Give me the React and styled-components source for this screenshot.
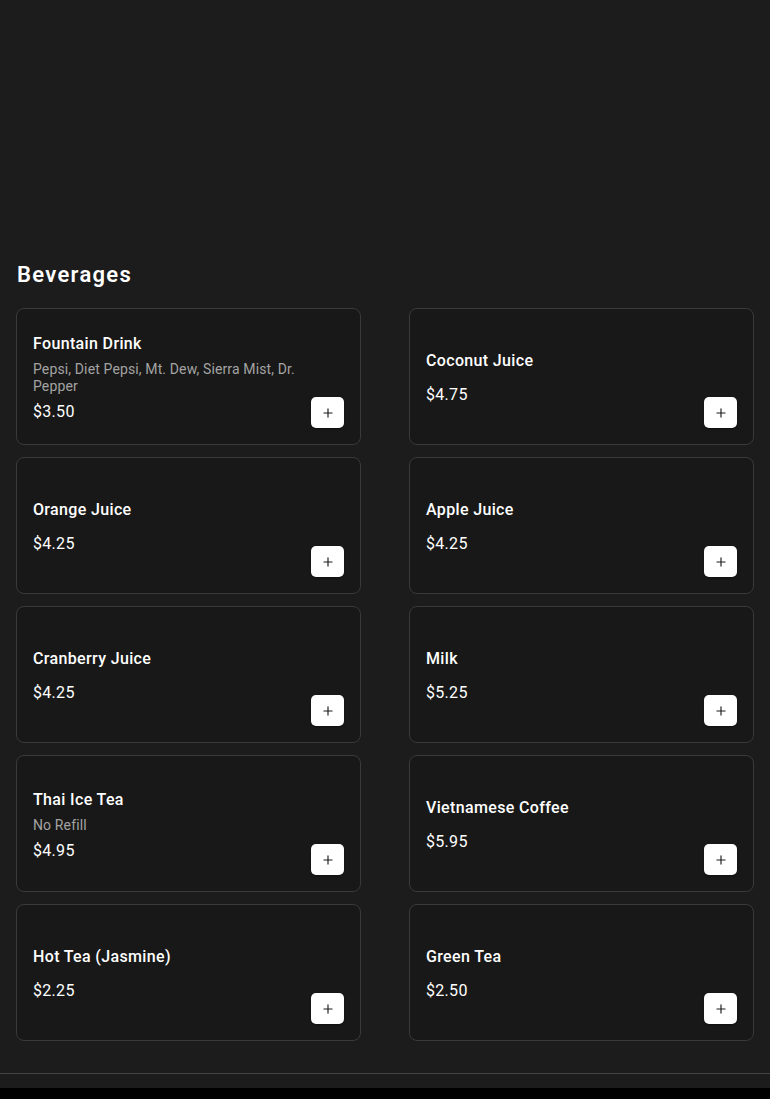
import React from 'react'
import styled, { createGlobalStyle } from 'styled-components'
import { Plus } from 'lucide-react'

const GlobalStyle = createGlobalStyle`
    * { box-sizing: border-box; }
    html, body {
        margin: 0;
        padding: 0;
        background: #000;
    }
    body {
        font-family: Roboto, "Liberation Sans", sans-serif;
        color: #fff;
    }
`;

const Page = styled.div`
    background: #1c1c1c;
`;

const Hero = styled.div`
    height: 237px;
`;

const Section = styled.section`
    padding: 24px 16px 32px;
`;

const Heading = styled.h2`
    margin: 0 0 19px;
    font-size: 22px;
    line-height: 28px;
    font-weight: 600;
    letter-spacing: 1.3px;
    padding-left: 1px;
`;

const Grid = styled.div`
    display: grid;
    grid-template-columns: 1fr 1fr;
    column-gap: 48px;
    row-gap: 12px;
`;

const Card = styled.div`
    display: flex;
    justify-content: space-between;
    min-height: 137px;
    padding: 16px;
    background: #181818;
    border: 1px solid #3a3a3a;
    border-radius: 8px;
`;

const Info = styled.div`
    display: flex;
    flex-direction: column;
    align-self: center;
    padding: 3px 12px 0 0;
`;

const Title = styled.div`
    font-size: 16px;
    line-height: 24px;
    font-weight: 500;
    letter-spacing: 0.35px;
`;

const Desc = styled.div`
    margin-top: 5px;
    font-size: 14px;
    line-height: 17px;
    letter-spacing: 0.13px;
    color: #a3a3a3;
`;

const Price = styled.div`
    margin-top: ${props => props.tight ? '5px' : '10px'};
    font-size: 16px;
    line-height: 24px;
    letter-spacing: 0.3px;
`;

const AddButton = styled.button`
    align-self: flex-end;
    flex-shrink: 0;
    width: 33px;
    height: 31px;
    display: flex;
    align-items: center;
    justify-content: center;
    padding: 0;
    border: none;
    border-radius: 5px;
    background: #fff;
    color: #1c1c1c;
    box-shadow: 0 1px 2px rgba(0, 0, 0, 0.4);
    cursor: pointer;
`;

const Footer = styled.footer`
    height: 15px;
    border-top: 1px solid #444;
    background: #1c1c1c;
`;

const items = [
    { name: 'Fountain Drink', desc: 'Pepsi, Diet Pepsi, Mt. Dew, Sierra Mist, Dr. Pepper', price: '$3.50' },
    { name: 'Coconut Juice', price: '$4.75' },
    { name: 'Orange Juice', price: '$4.25' },
    { name: 'Apple Juice', price: '$4.25' },
    { name: 'Cranberry Juice', price: '$4.25' },
    { name: 'Milk', price: '$5.25' },
    { name: 'Thai Ice Tea', desc: 'No Refill', price: '$4.95' },
    { name: 'Vietnamese Coffee', price: '$5.95' },
    { name: 'Hot Tea (Jasmine)', price: '$2.25' },
    { name: 'Green Tea', price: '$2.50' },
];

export default function App() {
    return (
        <Page>
            <GlobalStyle />
            <Hero />
            <Section>
                <Heading>Beverages</Heading>
                <Grid>
                    {items.map(item => (
                        <Card key={item.name}>
                            <Info>
                                <Title>{item.name}</Title>
                                {item.desc && <Desc>{item.desc}</Desc>}
                                <Price tight={!!item.desc}>{item.price}</Price>
                            </Info>
                            <AddButton aria-label={`Add ${item.name}`}>
                                <Plus size={14} strokeWidth={2} />
                            </AddButton>
                        </Card>
                    ))}
                </Grid>
            </Section>
            <Footer />
        </Page>
    );
}
